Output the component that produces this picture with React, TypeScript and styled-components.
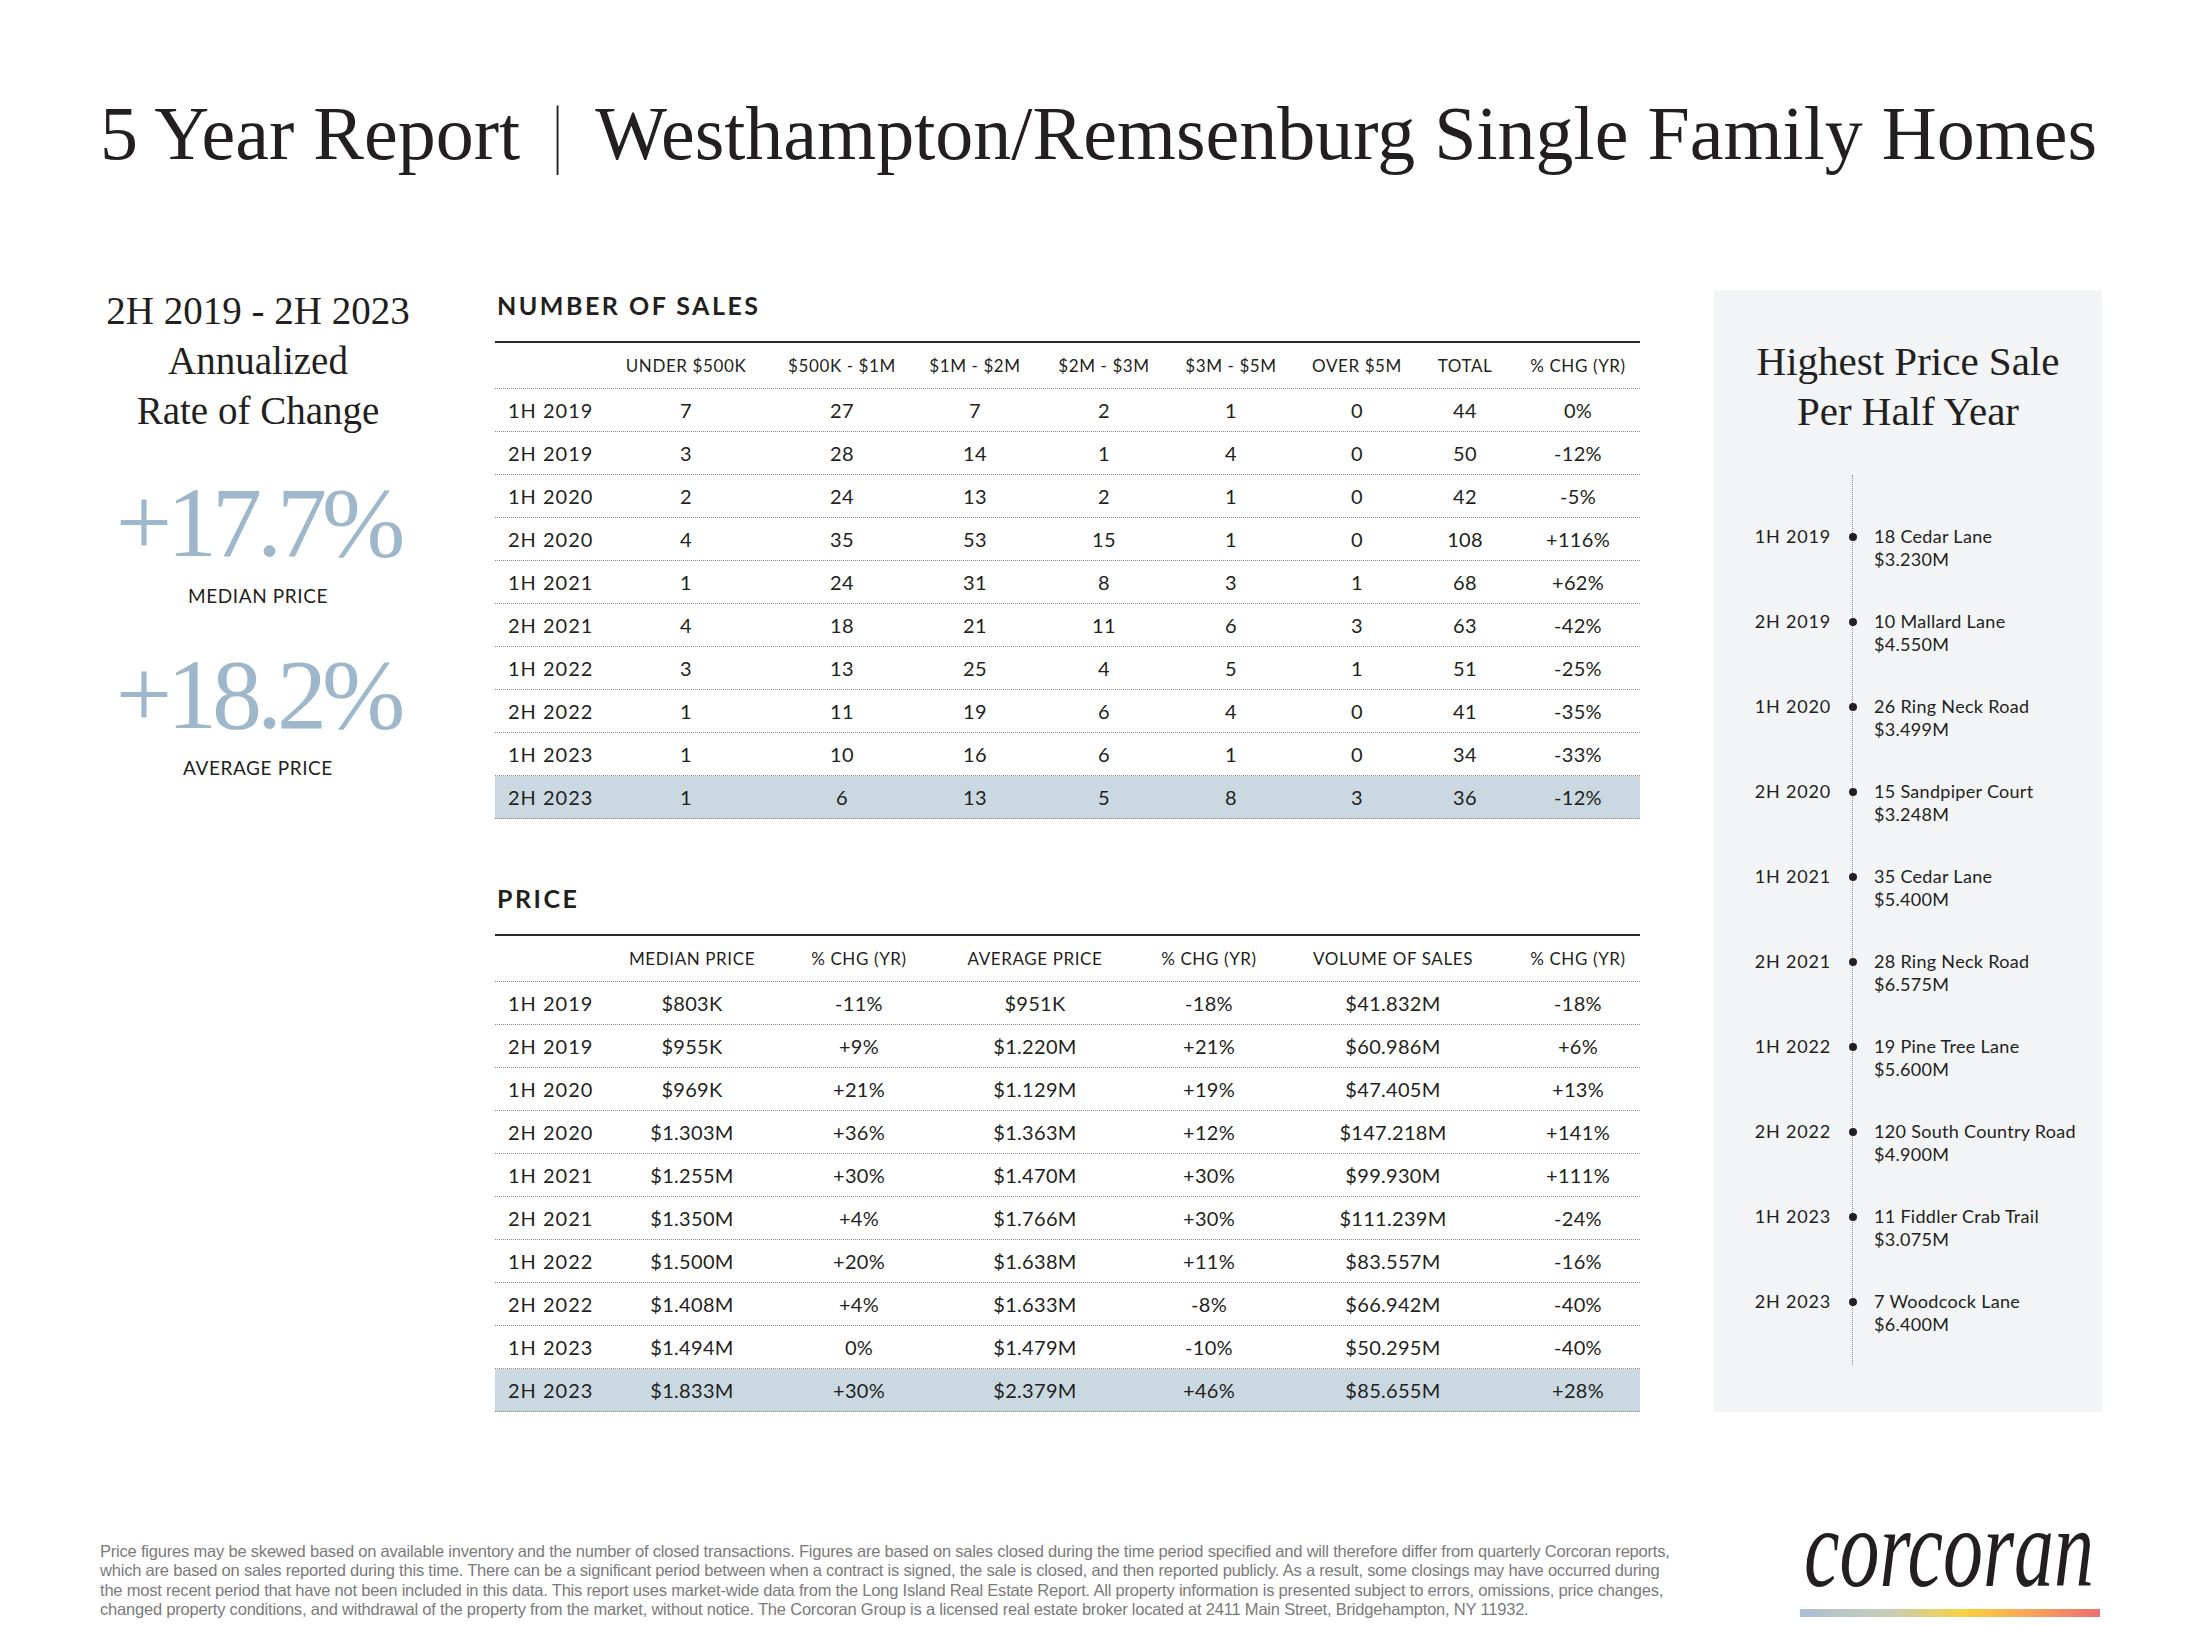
import styled, { createGlobalStyle } from 'styled-components';

const GlobalStyle = createGlobalStyle`
  html, body {
    margin: 0;
    padding: 0;
    background: #ffffff;
  }
  body {
    font-family: Lato, "Liberation Sans", sans-serif;
    color: #231f20;
  }
`;

const salesCols = '97px 188px 124px 142px 116px 138px 114px 102px 124px';
const salesHead = ['', 'UNDER $500K', '$500K - $1M', '$1M - $2M', '$2M - $3M', '$3M - $5M', 'OVER $5M', 'TOTAL', '% CHG (YR)'];
const salesRows = [
  ['1H 2019', '7', '27', '7', '2', '1', '0', '44', '0%'],
  ['2H 2019', '3', '28', '14', '1', '4', '0', '50', '-12%'],
  ['1H 2020', '2', '24', '13', '2', '1', '0', '42', '-5%'],
  ['2H 2020', '4', '35', '53', '15', '1', '0', '108', '+116%'],
  ['1H 2021', '1', '24', '31', '8', '3', '1', '68', '+62%'],
  ['2H 2021', '4', '18', '21', '11', '6', '3', '63', '-42%'],
  ['1H 2022', '3', '13', '25', '4', '5', '1', '51', '-25%'],
  ['2H 2022', '1', '11', '19', '6', '4', '0', '41', '-35%'],
  ['1H 2023', '1', '10', '16', '6', '1', '0', '34', '-33%'],
  ['2H 2023', '1', '6', '13', '5', '8', '3', '36', '-12%'],
];

const priceCols = '93px 208px 126px 226px 122px 246px 124px';
const priceHead = ['', 'MEDIAN PRICE', '% CHG (YR)', 'AVERAGE PRICE', '% CHG (YR)', 'VOLUME OF SALES', '% CHG (YR)'];
const priceRows = [
  ['1H 2019', '$803K', '-11%', '$951K', '-18%', '$41.832M', '-18%'],
  ['2H 2019', '$955K', '+9%', '$1.220M', '+21%', '$60.986M', '+6%'],
  ['1H 2020', '$969K', '+21%', '$1.129M', '+19%', '$47.405M', '+13%'],
  ['2H 2020', '$1.303M', '+36%', '$1.363M', '+12%', '$147.218M', '+141%'],
  ['1H 2021', '$1.255M', '+30%', '$1.470M', '+30%', '$99.930M', '+111%'],
  ['2H 2021', '$1.350M', '+4%', '$1.766M', '+30%', '$111.239M', '-24%'],
  ['1H 2022', '$1.500M', '+20%', '$1.638M', '+11%', '$83.557M', '-16%'],
  ['2H 2022', '$1.408M', '+4%', '$1.633M', '-8%', '$66.942M', '-40%'],
  ['1H 2023', '$1.494M', '0%', '$1.479M', '-10%', '$50.295M', '-40%'],
  ['2H 2023', '$1.833M', '+30%', '$2.379M', '+46%', '$85.655M', '+28%'],
];

const topSales = [
  ['1H 2019', '18 Cedar Lane', '$3.230M'],
  ['2H 2019', '10 Mallard Lane', '$4.550M'],
  ['1H 2020', '26 Ring Neck Road', '$3.499M'],
  ['2H 2020', '15 Sandpiper Court', '$3.248M'],
  ['1H 2021', '35 Cedar Lane', '$5.400M'],
  ['2H 2021', '28 Ring Neck Road', '$6.575M'],
  ['1H 2022', '19 Pine Tree Lane', '$5.600M'],
  ['2H 2022', '120 South Country Road', '$4.900M'],
  ['1H 2023', '11 Fiddler Crab Trail', '$3.075M'],
  ['2H 2023', '7 Woodcock Lane', '$6.400M'],
];

function DataTable({ cols, head, rows }: { cols: string; head: string[]; rows: string[][] }) {
  return (
    <Table>
      <Row $cols={cols} $head>
        {head.map((h, i) => (
          <HeadCell key={i} $first={i === 0}>{h}</HeadCell>
        ))}
      </Row>
      {rows.map((r, ri) => (
        <Row key={ri} $cols={cols} $highlight={ri === rows.length - 1}>
          {r.map((c, i) => (
            <Cell key={i} $first={i === 0}>{c}</Cell>
          ))}
        </Row>
      ))}
    </Table>
  );
}

function App() {
  return (
    <>
      <GlobalStyle />
      <Page>
        <Title>
          5 Year Report<Divider>|</Divider>Westhampton/Remsenburg Single Family Homes
        </Title>

        <Main>
          <Summary>
            <SummaryHeading>
              2H 2019 - 2H 2023
              <br />
              Annualized
              <br />
              Rate of Change
            </SummaryHeading>
            <Stat>
              <StatValue>+17.7%</StatValue>
              <StatLabel>MEDIAN PRICE</StatLabel>
            </Stat>
            <Stat>
              <StatValue>+18.2%</StatValue>
              <StatLabel>AVERAGE PRICE</StatLabel>
            </Stat>
          </Summary>

          <Tables>
            <Section>
              <SectionTitle>NUMBER OF SALES</SectionTitle>
              <DataTable cols={salesCols} head={salesHead} rows={salesRows} />
            </Section>
            <Section>
              <SectionTitle>PRICE</SectionTitle>
              <DataTable cols={priceCols} head={priceHead} rows={priceRows} />
            </Section>
          </Tables>

          <Side>
            <SideTitle>
              Highest Price Sale
              <br />
              Per Half Year
            </SideTitle>
            <Timeline>
              {topSales.map(([period, address, price]) => (
                <Entry key={period}>
                  <EntryPeriod>{period}</EntryPeriod>
                  <EntryMark>
                    <Dot />
                  </EntryMark>
                  <EntryBody>
                    {address}
                    <br />
                    {price}
                  </EntryBody>
                </Entry>
              ))}
            </Timeline>
          </Side>
        </Main>

        <Footer>
          <Disclaimer>
            Price figures may be skewed based on available inventory and the number of closed transactions. Figures are based on sales closed during the time period specified and will therefore differ from quarterly Corcoran reports,
            <br />
            which are based on sales reported during this time. There can be a significant period between when a contract is signed, the sale is closed, and then reported publicly. As a result, some closings may have occurred during
            <br />
            the most recent period that have not been included in this data. This report uses market-wide data from the Long Island Real Estate Report. All property information is presented subject to errors, omissions, price changes,
            <br />
            changed property conditions, and withdrawal of the property from the market, without notice. The Corcoran Group is a licensed real estate broker located at 2411 Main Street, Bridgehampton, NY 11932.
          </Disclaimer>
          <Brand>
            <LogoMark width="300" height="126" viewBox="0 0 300 126">
              <text
                x="4"
                y="102"
                textLength="290"
                lengthAdjust="spacingAndGlyphs"
                fontFamily="'Liberation Serif', serif"
                fontStyle="italic"
                fontSize="112"
                fill="#231f20"
              >
                corcoran
              </text>
            </LogoMark>
            <BrandBar />
          </Brand>
        </Footer>
      </Page>
    </>
  );
}

const Page = styled.div`
    width: 2200px;
    height: 1625px;
    box-sizing: border-box;
    padding: 95px 98px 0 100px;
    background: #ffffff;
    overflow: hidden;
  `,
  Title = styled.h1`
    margin: 0;
    font-family: 'Liberation Serif', serif;
    font-weight: 400;
    font-size: 76px;
    line-height: 76px;
    color: #231f20;
    white-space: nowrap;
  `,
  Divider = styled.span`
    display: inline-block;
    margin: 0 30px;
    font-weight: 300;
    color: #231f20;
    transform: scaleX(0.5);
  `,
  Main = styled.div`
    display: flex;
    align-items: stretch;
    margin-top: 119px;
  `,
  Summary = styled.div`
    width: 316px;
    display: flex;
    flex-direction: column;
    align-items: center;
    text-align: center;
  `,
  SummaryHeading = styled.div`
    margin-top: -4px;
    font-family: 'Liberation Serif', serif;
    font-size: 39px;
    line-height: 50px;
    color: #231f20;
  `,
  Stat = styled.div`
    display: flex;
    flex-direction: column;
    align-items: center;
    margin-top: 37px;
  `,
  StatValue = styled.div`
    font-family: 'Liberation Serif', serif;
    font-size: 100px;
    line-height: 100px;
    letter-spacing: -5px;
    color: #9fb7ca;
  `,
  StatLabel = styled.div`
    margin-top: 11px;
    font-size: 19px;
    line-height: 24px;
    letter-spacing: 0.6px;
    color: #231f20;
  `,
  Tables = styled.div`
    width: 1145px;
    margin: 0 74px 0 79px;
    display: flex;
    flex-direction: column;
    gap: 64px;
  `,
  Section = styled.div`
    display: flex;
    flex-direction: column;
  `,
  SectionTitle = styled.div`
    margin-left: 2px;
    font-size: 25px;
    line-height: 30px;
    font-weight: 700;
    letter-spacing: 2.5px;
    color: #231f20;
    margin-bottom: 21px;
  `,
  Table = styled.div`
    border-top: 2px solid #2a2a2a;
  `,
  Row = styled.div<{ $cols: string; $head?: boolean; $highlight?: boolean }>`
    display: grid;
    grid-template-columns: ${(p) => p.$cols};
    align-items: center;
    height: ${(p) => (p.$head ? '45px' : '42px')};
    border-bottom: 1px dotted #8a8a8a;
    background: ${(p) => (p.$highlight ? '#cad8e2' : 'transparent')};
  `,
  HeadCell = styled.div<{ $first?: boolean }>`
    display: flex;
    justify-content: ${(p) => (p.$first ? 'flex-start' : 'center')};
    white-space: nowrap;
    font-size: 17px;
    letter-spacing: 0.6px;
    color: #231f20;
  `,
  Cell = styled.div<{ $first?: boolean }>`
    display: flex;
    justify-content: ${(p) => (p.$first ? 'flex-start' : 'center')};
    padding-left: ${(p) => (p.$first ? '13px' : '0')};
    white-space: nowrap;
    font-size: 20px;
    letter-spacing: ${(p) => (p.$first ? '1px' : '0.3px')};
    color: #231f20;
  `,
  Side = styled.div`
    width: 388px;
    background: #f2f4f6;
    display: flex;
    flex-direction: column;
  `,
  SideTitle = styled.div`
    margin-top: 46px;
    text-align: center;
    font-family: 'Liberation Serif', serif;
    font-size: 41px;
    line-height: 50px;
    color: #231f20;
  `,
  Timeline = styled.div`
    position: relative;
    margin-top: 39px;
    padding: 50px 0 29px;
    display: flex;
    flex-direction: column;
    gap: 39px;

    &::before {
      content: '';
      position: absolute;
      left: 138px;
      top: 0;
      bottom: 0;
      border-left: 1px dotted #8a8a8a;
    }
  `,
  Entry = styled.div`
    display: grid;
    grid-template-columns: 117px 43px 1fr;
    font-size: 18px;
    line-height: 23px;
    color: #231f20;
  `,
  EntryPeriod = styled.div`
    text-align: right;
    letter-spacing: 0.8px;
  `,
  EntryMark = styled.div`
    height: 23px;
    display: flex;
    align-items: center;
    justify-content: center;
  `,
  Dot = styled.span`
    width: 8px;
    height: 8px;
    border-radius: 50%;
    background: #231f20;
    position: relative;
    z-index: 1;
  `,
  EntryBody = styled.div`
    letter-spacing: 0.3px;
  `,
  Footer = styled.div`
    display: flex;
    justify-content: space-between;
    align-items: flex-start;
    margin-top: 120px;
  `,
  Disclaimer = styled.div`
    margin-top: 10px;
    font-family: 'Liberation Sans', sans-serif;
    font-size: 16.5px;
    line-height: 19.4px;
    letter-spacing: -0.2px;
    color: #7a7a7a;
    white-space: nowrap;
  `,
  Brand = styled.div`
    width: 300px;
    display: flex;
    flex-direction: column;
    margin-right: 2px;
  `,
  LogoMark = styled.svg`
    display: block;
    margin-top: -48px;
  `,
  BrandBar = styled.div`
    margin-top: -1px;
    height: 8px;
    background: linear-gradient(to right, #a9c0d3 0%, #c8cdb6 30%, #f9d13f 55%, #f6a25d 78%, #ee6e72 100%);
  `;

export default App;
